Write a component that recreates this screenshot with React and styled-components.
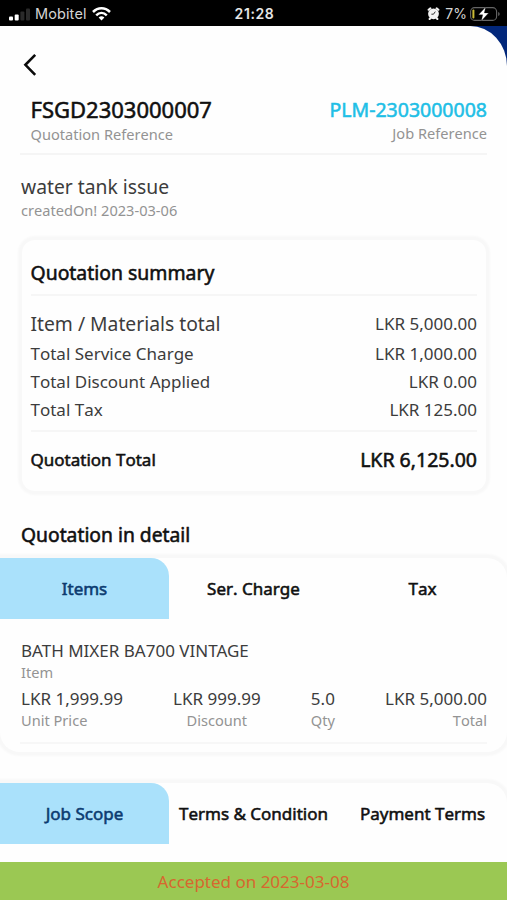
import React from 'react'
import styled, { createGlobalStyle } from 'styled-components'

const GlobalStyle = createGlobalStyle`
  * {
    box-sizing: border-box;
  }

  body {
    margin: 0;
    background: #fefefe;
    font-family: 'Noto Sans', 'Open Sans', sans-serif;
    font-kerning: none;
    color: #3c3c3c;
  }
`

const Screen = styled.div`
  display: flex;
  flex-direction: column;
  width: 507px;
  height: 900px;
  overflow: hidden;
  background: #02277a;
`

const StatusBar = styled.header`
  display: grid;
  grid-template-columns: 1fr auto 1fr;
  align-items: center;
  flex: none;
  height: 26px;
  padding: 1px 7px 0 9px;
  background: #000;
  color: #d4d4d4;
  font-family: Inter, 'Liberation Sans', sans-serif;
  font-size: 14px;
`

const StatusGroup = styled.div`
  display: flex;
  align-items: center;
  justify-content: ${({ $end }) => ($end ? 'flex-end' : 'flex-start')};
  gap: 4px;
`

const Clock = styled.div`
  font-size: 14px;
  font-weight: 600;
  letter-spacing: 0.6px;
  color: #e6e6e6;
`

const Carrier = styled.span`
  margin-right: 1px;
  font-size: 14.5px;
  letter-spacing: 0.1px;
`

const Charge = styled.span`
  margin: 0 -1px 0 1px;
  font-size: 14px;
`

const Sheet = styled.main`
  display: flex;
  flex-direction: column;
  flex: 1;
  min-height: 0;
  overflow: hidden;
  background: #fefefe;
  border-top-right-radius: 37px 40px;
`

const BackButton = styled.button`
  display: flex;
  align-items: center;
  flex: none;
  width: 40px;
  height: 24px;
  margin: 27px 0 0 22px;
  padding: 0;
  border: 0;
  background: none;
`

const Line = styled.div`
  font-size: ${({ $size }) => $size || 17}px;
  line-height: ${({ $height }) => $height || 28}px;
  font-kerning: ${({ $kern }) => ($kern ? 'normal' : 'none')};
  color: ${({ $color }) => $color || '#3c3c3c'};
  white-space: nowrap;
`

// regular weight thickened with a stroke, keeps the narrow letter widths
const Strong = styled(Line)`
  color: ${({ $color }) => $color || '#101010'};
  -webkit-text-stroke: 0.55px currentColor;
`

const Caption = styled(Line)`
  font-size: 14.6px;
  line-height: ${({ $height }) => $height || 21}px;
  color: #939393;
`

const References = styled.section`
  display: flex;
  justify-content: space-between;
  flex: none;
  height: 61px;
  margin: 17px 20px 0;
  padding-left: 10.5px;
  border-bottom: 2px solid #f5f5f5;
`

const Column = styled.div`
  display: flex;
  flex-direction: column;
  align-items: ${({ $end }) => ($end ? 'flex-end' : 'flex-start')};
`

const Subject = styled.section`
  flex: none;
  height: 66px;
  margin: 19px 21px 0;
`

const Summary = styled.section`
  flex: none;
  height: 251px;
  margin: 0 21px 0 22px;
  padding: 17px 9px 0 8.5px;
  border-radius: 13px;
  box-shadow: 0 0 2px 4px #f8f8f8;
`

const SummaryTitle = styled.div`
  height: 39px;
  border-bottom: 2px solid #f6f6f6;
`

const Rows = styled.div`
  height: 136px;
  padding-top: 12px;
  border-bottom: 2px solid #f6f6f6;
`

const Row = styled.div`
  display: flex;
  justify-content: space-between;
  align-items: center;
  height: ${({ $height }) => $height || 28}px;
`

const TotalRow = styled(Row)`
  height: 56px;
`

const SectionTitle = styled.div`
  flex: none;
  height: 37px;
  margin: 30px 21px 0;
`

const Panel = styled.section`
  flex: none;
  height: ${({ $height }) => $height}px;
  margin-bottom: 31px;
  border-radius: 0 20px 20px 20px;
  box-shadow: 0 0 2px 4px #f8f8f8;
`

const Tabs = styled.nav`
  display: grid;
  grid-template-columns: repeat(3, 1fr);
  height: 61px;
`

const Tab = styled.div`
  display: flex;
  align-items: center;
  justify-content: center;
  padding-top: 1px;
  border-top-right-radius: 18px;
  background: ${({ $active }) => ($active ? '#aae1fb' : 'transparent')};
`

const Item = styled.div`
  height: 125px;
  margin: 0 20px;
  padding: 20px 0 0 1px;
  border-bottom: 2px solid #f7f7f7;
`

const Amounts = styled.div`
  display: flex;
  justify-content: space-between;
  margin-top: 4px;
`

const Amount = styled.div`
  text-align: ${({ $align }) => $align};
`

const Footer = styled.footer`
  display: flex;
  align-items: center;
  justify-content: center;
  flex: none;
  height: 38px;
  padding-top: 1px;
  background: #9bc853;
`

const rows = [
  { label: 'Item / Materials total', value: 'LKR 5,000.00', size: 19.3, height: 32 },
  { label: 'Total Service Charge', value: 'LKR 1,000.00' },
  { label: 'Total Discount Applied', value: 'LKR 0.00' },
  { label: 'Total Tax', value: 'LKR 125.00' },
]

const amounts = [
  { label: 'Unit Price', value: 'LKR 1,999.99', align: 'left' },
  { label: 'Discount', value: 'LKR 999.99', align: 'center' },
  { label: 'Qty', value: '5.0', align: 'center' },
  { label: 'Total', value: 'LKR 5,000.00', align: 'right' },
]

const SignalIcon = () => (
  <svg width="22" height="14" viewBox="0 0 22 14">
    <rect x="0" y="9.5" width="4" height="4" rx="1" fill="#fff" />
    <rect x="5.7" y="7.5" width="4" height="6" rx="1" fill="#fff" />
    <rect x="11.4" y="4.5" width="4" height="9" rx="1" fill="#2a2a2a" />
    <rect x="17" y="1.5" width="4" height="12" rx="1" fill="#2a2a2a" />
  </svg>
)

const WifiIcon = () => (
  <svg width="19" height="14" viewBox="0 0 19 14" fill="none" stroke="#fff" strokeWidth="2.5">
    <path d="M1 5C6 0 13 0 18 5" />
    <path d="M4.2 8.3C7.3 5.3 11.7 5.3 14.8 8.3" />
    <path d="M6.6 10.6Q9.5 8 12.4 10.6L9.5 13.6Z" fill="#fff" stroke="none" />
  </svg>
)

const AlarmIcon = () => (
  <svg width="13" height="13" viewBox="0 0 13 13">
    <path d="M1.6 2.8L3.4 1.4M11.4 2.8L9.6 1.4M2.6 12L3.6 10.8M10.4 12L9.4 10.8" stroke="#f2f2f2" strokeWidth="2" strokeLinecap="round" />
    <circle cx="6.5" cy="6.8" r="5.4" fill="#f2f2f2" />
    <path d="M8.3 4.6L6.5 7.2H4.4" fill="none" stroke="#333" strokeWidth="1" />
  </svg>
)

const BatteryIcon = () => (
  <svg width="30" height="16" viewBox="0 0 30 16">
    <rect x="0.6" y="1.6" width="26" height="12.8" rx="4" fill="none" stroke="#666" strokeWidth="1.1" />
    <path d="M28.2 6V10Q29.7 9.4 29.7 8T28.2 6Z" fill="#666" />
    <rect x="2.4" y="3.6" width="2" height="8.8" rx="1" fill="#c9b935" />
    <path d="M15.7 1L8.5 8.8H12.7L11.3 15L18.6 6.9H14.3Z" fill="#fff" stroke="#000" strokeWidth="0.3" />
  </svg>
)

const BackIcon = () => (
  <svg width="16" height="24" viewBox="0 0 16 24">
    <path d="M13.2 1.8L3.4 11.8L13.2 21.8" fill="none" stroke="#0b0b0b" strokeWidth="2.6" />
  </svg>
)

const TabBar = ({ tabs }) => (
  <Tabs>
    {tabs.map((name, i) => (
      <Tab key={name} $active={i === 0}>
        <Strong $color={i === 0 ? '#0b3b70' : undefined}>{name}</Strong>
      </Tab>
    ))}
  </Tabs>
)

const App = () => {
  return (
    <Screen>
      <GlobalStyle />
      <StatusBar>
        <StatusGroup>
          <SignalIcon />
          <Carrier>Mobitel</Carrier>
          <WifiIcon />
        </StatusGroup>
        <Clock>21:28</Clock>
        <StatusGroup $end>
          <AlarmIcon />
          <Charge>7%</Charge>
          <BatteryIcon />
        </StatusGroup>
      </StatusBar>

      <Sheet>
        <BackButton aria-label="Back">
          <BackIcon />
        </BackButton>

        <References>
          <Column>
            <Strong $size={22} $height={30}>FSGD2303000007</Strong>
            <Caption>Quotation Reference</Caption>
          </Column>
          <Column $end>
            <Strong $size={19.5} $height={31} $color="#1fbfe6">PLM-2303000008</Strong>
            <Caption $height={17}>Job Reference</Caption>
          </Column>
        </References>

        <Subject>
          <Line $size={19.3} $height={26}>water tank issue</Line>
          <Caption>createdOn! 2023-03-06</Caption>
        </Subject>

        <Summary>
          <SummaryTitle>
            <Strong $size={19.4} $height={31}>Quotation summary</Strong>
          </SummaryTitle>
          <Rows>
            {rows.map((row) => (
              <Row key={row.label} $height={row.height}>
                <Line $size={row.size}>{row.label}</Line>
                <Line>{row.value}</Line>
              </Row>
            ))}
          </Rows>
          <TotalRow>
            <Strong>Quotation Total</Strong>
            <Strong $size={19.5}>LKR 6,125.00</Strong>
          </TotalRow>
        </Summary>

        <SectionTitle>
          <Strong $size={19.3}>Quotation in detail</Strong>
        </SectionTitle>

        <Panel $height={194}>
          <TabBar tabs={['Items', 'Ser. Charge', 'Tax']} />
          <Item>
            <Line $height={23} $kern>BATH MIXER BA700 VINTAGE</Line>
            <Caption $height={20}>Item</Caption>
            <Amounts>
              {amounts.map((a) => (
                <Amount key={a.label} $align={a.align}>
                  <Line $height={25}>{a.value}</Line>
                  <Caption $height={18}>{a.label}</Caption>
                </Amount>
              ))}
            </Amounts>
          </Item>
        </Panel>

        <Panel $height={160}>
          <TabBar tabs={['Job Scope', 'Terms & Condition', 'Payment Terms']} />
        </Panel>
      </Sheet>

      <Footer>
        <Line $color="#d7672f">Accepted on 2023-03-08</Line>
      </Footer>
    </Screen>
  )
}

export default App
